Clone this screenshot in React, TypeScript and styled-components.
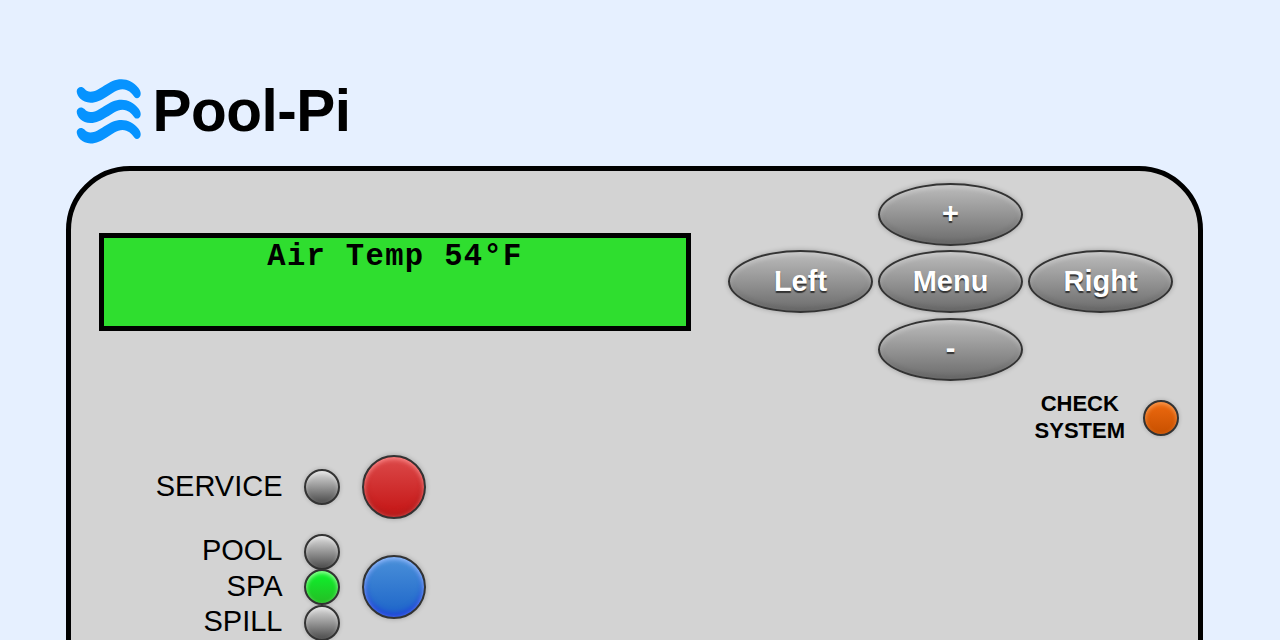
import React from "react";
import styled, { createGlobalStyle } from "styled-components";

const GlobalStyle = createGlobalStyle`
  *, *::before, *::after { box-sizing: border-box; }
  html, body, #root { height: 100%; }
  body {
    margin: 0;
    overflow: hidden;
    background: #e6f0ff;
    color: #000;
    font-family: "Liberation Sans", Arial, Helvetica, sans-serif;
  }
`;

const Page = styled.main`
  height: 100%;
  overflow: hidden;
  padding: 77px 77px 0 66px;
`;

const Header = styled.header`
  display: flex;
  align-items: center;
  height: 68px;
  margin-bottom: 21px;
  padding-left: 10px;
`;

const Logo = styled.svg`
  width: 66px;
  height: 68px;
  fill: #0693ff;
`;

const Title = styled.h1`
  margin: 0 0 0 10.5px;
  font-size: 58.5px;
  line-height: 68px;
  letter-spacing: -0.5px;
`;

const Panel = styled.section`
  display: flex;
  justify-content: space-between;
  width: 1137px;
  height: 900px;
  border: 5px solid #000;
  border-radius: 64px;
  background: #d3d3d3;
`;

const Main = styled.div`
  width: 620px;
  padding: 62px 0 0 28px;
`;

const Display = styled.div`
  width: 592px;
  height: 98px;
  border: 5px solid #000;
  background: #2fde2f;
  font: bold 30.5px/38px "Liberation Mono", "Courier New", monospace;
  letter-spacing: 1.35px;
  text-align: center;
  white-space: pre;
`;

const Controls = styled.div`
  padding-top: 124px;
`;

const ControlGroup = styled.div`
  display: flex;
  align-items: center;
  margin-bottom: 15px;
`;

const Indicators = styled.div`
  width: 241px;
  margin-right: 22px;
`;

const IndicatorRow = styled.div`
  display: flex;
  align-items: center;
  justify-content: flex-end;
  height: 35.5px;
  font-size: 29px;
  line-height: 33px;
`;

const Label = styled.span`
  margin-right: 21.5px;
  padding-bottom: 2px;
`;

const lights = {
  off: ["#dedede", "#4c4c4c", "rgba(255,255,255,.35)"],
  green: ["#0cf52c", "#25bd25", "rgba(200,255,190,.8)"],
  orange: ["#ee6a10", "#c85000", "rgba(255,190,130,.6)"],
};

const Led = styled.span<{ $light: keyof typeof lights }>`
  flex: none;
  width: 36px;
  height: 36px;
  border: 2px solid #333;
  border-radius: 50%;
  background: linear-gradient(${(p) => lights[p.$light][0]}, ${(p) => lights[p.$light][1]});
  box-shadow: inset 0 2px 4px ${(p) => lights[p.$light][2]}, 0 0 4px rgba(0, 0, 0, 0.2);
`;

const tones = {
  red: ["#dc4a4a", "#c41414", "#ff9090", "#b02020"],
  blue: ["#4a90d9", "#1c64c8", "#a0c4ff", "#2038e0"],
};

const RoundButton = styled.button<{ $tone: keyof typeof tones }>`
  width: 64px;
  height: 64px;
  padding: 0;
  border: 2px solid #333;
  border-radius: 50%;
  background: linear-gradient(${(p) => tones[p.$tone][0]}, ${(p) => tones[p.$tone][1]});
  box-shadow: inset 0 2px 5px ${(p) => tones[p.$tone][2]},
    inset 0 -3px 6px ${(p) => tones[p.$tone][3]}, 0 0 5px rgba(0, 0, 0, 0.25);
`;

const Side = styled.aside`
  padding: 11.5px 19px 0 0;
`;

const Pad = styled.div`
  display: grid;
  grid-template-columns: repeat(3, 145px);
  grid-template-rows: repeat(3, 63px);
  grid-template-areas: ". up ." "left menu right" ". down .";
  gap: 4.5px 5px;
  padding-right: 6px;
`;

const PadButton = styled.button<{ $area: string }>`
  grid-area: ${(p) => p.$area};
  padding: 0 0 1px;
  border: 2px solid #333;
  border-radius: 50%;
  background: linear-gradient(#bcbcbc, #6c6c6c);
  box-shadow: inset 0 2px 5px rgba(255, 255, 255, 0.35),
    inset 0 -2px 5px rgba(0, 0, 0, 0.15), 0 0 5px rgba(0, 0, 0, 0.25);
  color: #fff;
  font: bold 29px/33px "Liberation Sans", Arial, sans-serif;
  text-shadow: 0 2px 1px #333;
`;

const CheckSystem = styled.div`
  display: flex;
  align-items: center;
  justify-content: flex-end;
  gap: 18px;
  margin-top: 10.5px;
  font-size: 22px;
  font-weight: bold;
  line-height: 26.5px;
  text-align: center;
`;

const wave =
  "M.7 14.3C.7 10.5 5.5 8.5 8.5 11.7C10.5 14 12 14.7 14.5 14.7C19 14.7 23 12 28 8.8C34 5 39 2.3 45.5 2.3C52 2.3 58 5.5 62.5 11C64 13 64.8 15 64.7 17C64.5 21 60.5 22.5 58.5 20C55.5 16 52 12.3 46.5 12.3C41 12.3 36 16.5 30.7 19.7C25 23.3 20.5 25.7 14.5 25.7C6 25.7 .7 19 .7 14.3Z";

export default function App() {
  return (
    <>
      <GlobalStyle />
      <Page>
        <Header>
          <Logo viewBox="0 0 66 68" aria-hidden="true">
            {[0, 20.4, 40.8].map((y) => (
              <path key={y} d={wave} transform={`translate(0 ${y})`} />
            ))}
          </Logo>
          <Title>Pool-Pi</Title>
        </Header>
        <Panel>
          <Main>
            <Display>Air Temp 54°F</Display>
            <Controls>
              <ControlGroup>
                <Indicators>
                  <IndicatorRow><Label>SERVICE</Label><Led $light="off" /></IndicatorRow>
                </Indicators>
                <RoundButton $tone="red" aria-label="Service" />
              </ControlGroup>
              <ControlGroup>
                <Indicators>
                  <IndicatorRow><Label>POOL</Label><Led $light="off" /></IndicatorRow>
                  <IndicatorRow><Label>SPA</Label><Led $light="green" /></IndicatorRow>
                  <IndicatorRow><Label>SPILL</Label><Led $light="off" /></IndicatorRow>
                </Indicators>
                <RoundButton $tone="blue" aria-label="Pool, spa or spill" />
              </ControlGroup>
            </Controls>
          </Main>
          <Side>
            <Pad>
              <PadButton $area="up">+</PadButton>
              <PadButton $area="left">Left</PadButton>
              <PadButton $area="menu">Menu</PadButton>
              <PadButton $area="right">Right</PadButton>
              <PadButton $area="down">-</PadButton>
            </Pad>
            <CheckSystem>
              <span>CHECK<br />SYSTEM</span>
              <Led $light="orange" />
            </CheckSystem>
          </Side>
        </Panel>
      </Page>
    </>
  );
}
